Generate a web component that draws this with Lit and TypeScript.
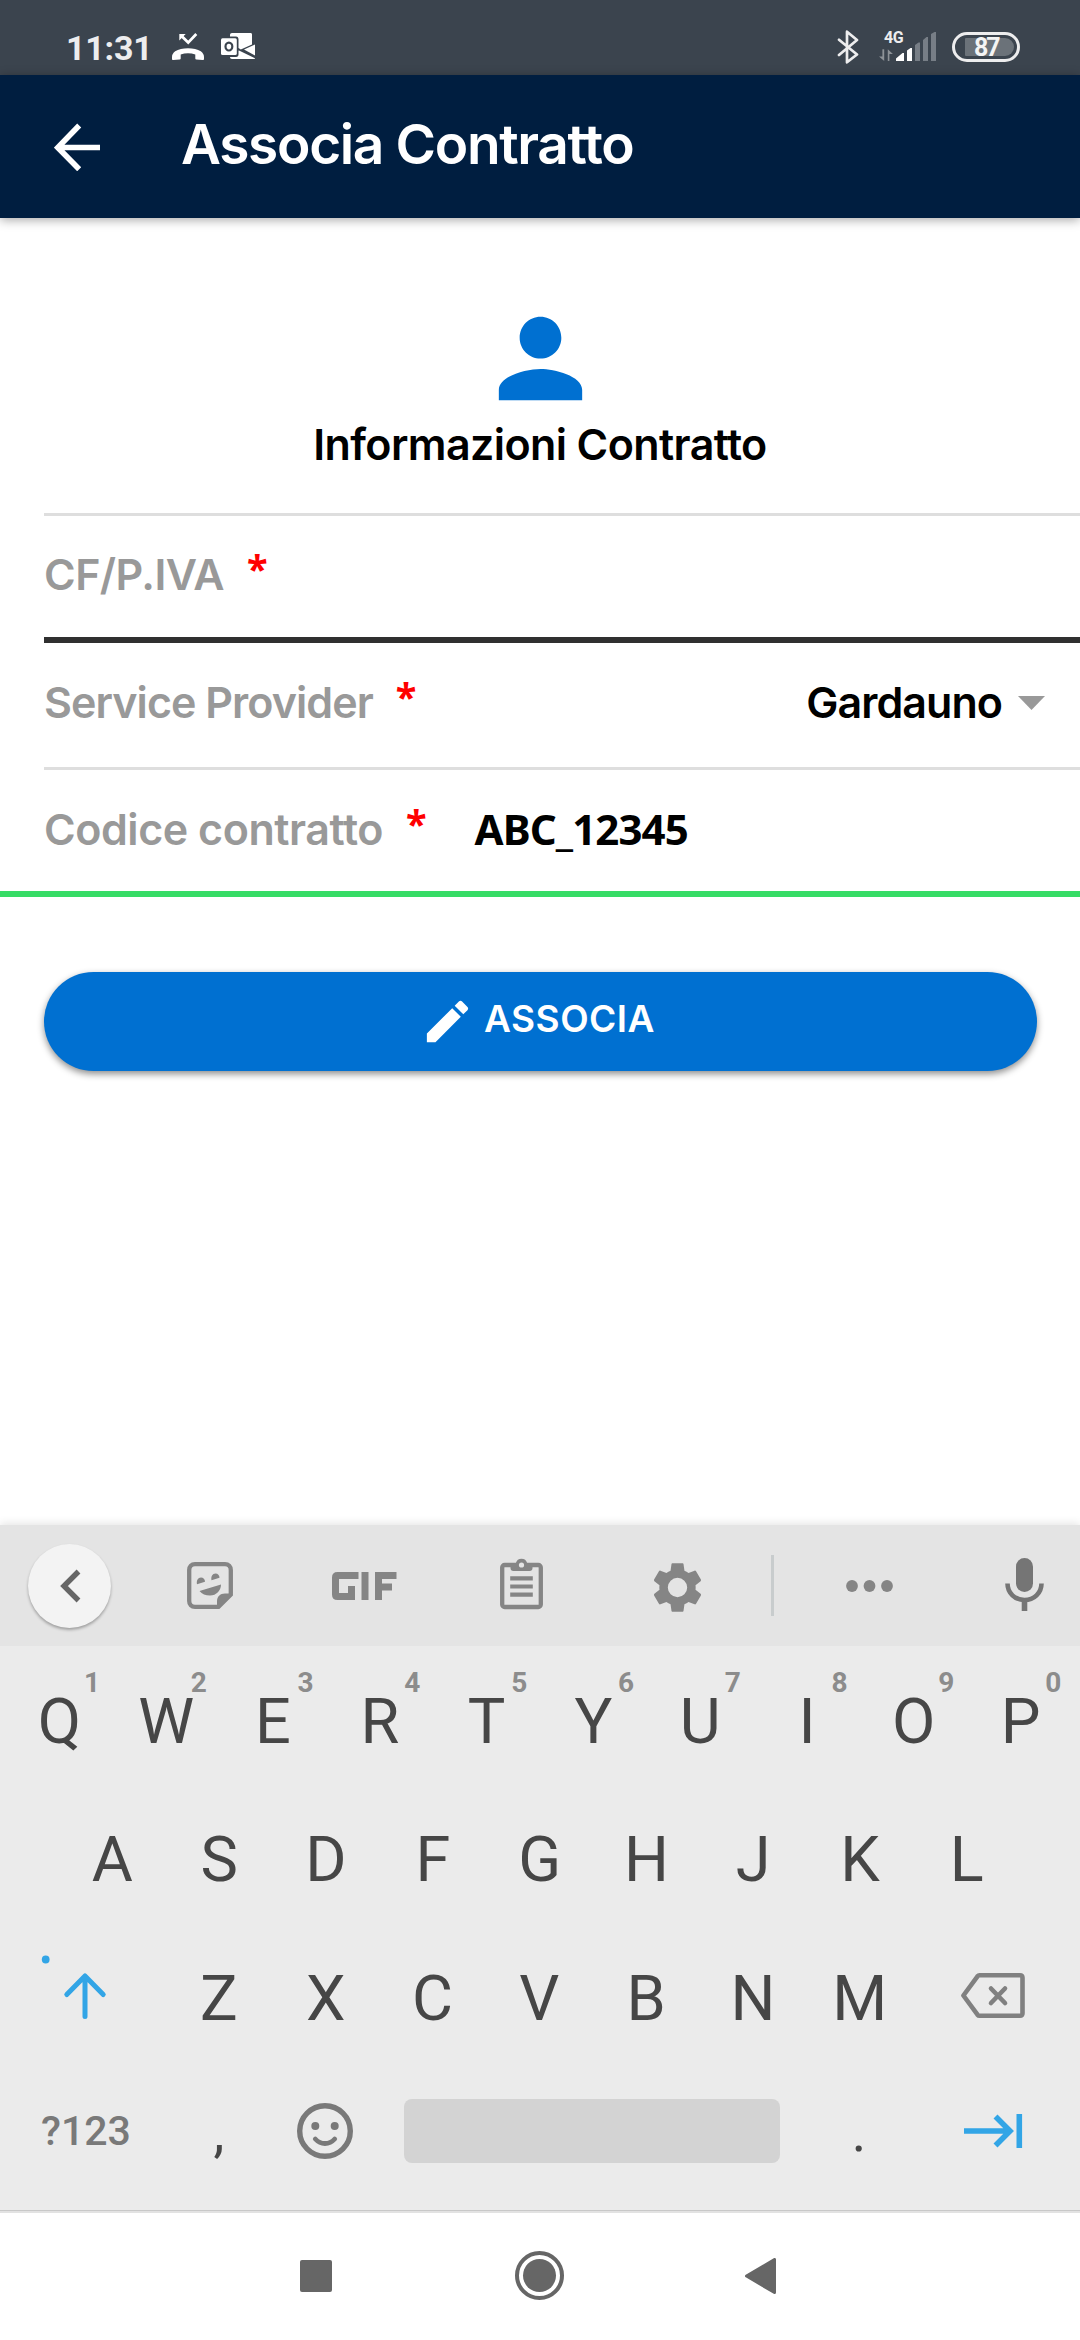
import { LitElement, html, css } from "lit";
import { customElement, property } from "lit/decorators.js";

/* ---------- Status bar ---------- */
@customElement("status-bar")
class StatusBar extends LitElement {
  static styles = css`
    :host { display: block; background: #3b444e; height: 75px; font-family: Roboto, sans-serif; }
    .bar { display: flex; height: 75px; padding: 0 60px 0 66px; box-sizing: border-box; align-items: flex-start; }
    .time { font-size: 34px; font-weight: 700; line-height: 40px; color: #ededee; margin-top: 28px; width: 106px; letter-spacing: -0.2px; white-space: nowrap; }
    .phone { margin-top: 32px; width: 32px; height: 29px; }
    .mail { margin: 32px 0 0 17px; width: 34px; height: 28px; }
    .spacer { flex: 1; }
    .bt { margin-top: 30px; width: 22px; height: 34px; }
    .net { margin: 30px 0 0 20px; width: 58px; height: 32px; position: relative; }
    .net svg { display: block; }
    .gen { position: absolute; left: 5px; top: -1px; font-size: 16px; line-height: 18px; font-weight: 700; color: #ededee; letter-spacing: -0.5px; }
    .batt { box-sizing: border-box; margin: 32px 0 0 15px; width: 68px; height: 30px; border: 3px solid #ededee; border-radius: 15px; padding: 3px 3px 3px 10px; display: flex; }
    .level { flex: 1; background: #6b7279; border-radius: 1px 9px 9px 1px; color: #f4f4f4; font-weight: 700; font-size: 25px; line-height: 19px; letter-spacing: -2px; padding-left: 9px; }
    svg { display: block; }
  `;
  render() {
    return html`
      <div class="bar">
        <div class="time">11:31</div>
        <svg class="phone" viewBox="0 0 32 29">
          <path fill="#fff" d="M16 16.2c5 0 9.6 1 12.800 3.100C31 20.900 32 22.800 32 25v2c0 .7-.6 1.200-1.300 1.100l-6.400-.6c-.6-.1-1-.5-1-1.100v-4c-4.600-1.400-10-1.400-14.600 0v4c0 .6-.4 1-1 1.100l-6.400.6C.6 28.200 0 27.700 0 27v-2c0-2.200 1-4.100 3.200-5.700C6.400 17.200 11 16.200 16 16.200z"/>
          <path fill="none" stroke="#fff" stroke-width="2.800" d="M9.500 4l6.700 6.600L24.300 2"/>
          <path fill="#fff" d="M7.300 2h6.400l-6.400 6.400z"/>
        </svg>
        <svg class="mail" viewBox="0 0 34 28">
          <path fill="#fff" d="M9 3.200C9 1.900 9.800 1 11 1h18.500c1 0 1.500.7 1.500 1.600v9.800L19.800 17.500 17.500 16V7.500c0-1.900-.8-3-2.500-3H9z"/>
          <path fill="#fff" d="M34 12.500v11L23 17.600z"/>
          <path fill="#fff" d="M18.500 18.800L34 26.200c0 .6-.5.8-1 .8H11c-1.200 0-2-.7-2-2h6c1.700 0 2.500-1.100 2.500-2.800v-3.800z"/>
          <rect x="0" y="6.300" width="15.800" height="16.700" rx="1.500" fill="#fff"/>
          <ellipse cx="7.900" cy="14.600" rx="3.400" ry="3.900" fill="none" stroke="#3b444e" stroke-width="2.200"/>
        </svg>
        <div class="spacer"></div>
        <svg class="bt" viewBox="0 0 22 34">
          <path fill="none" stroke="#ededee" stroke-width="2.700" stroke-linejoin="round" stroke-linecap="round" d="M2 9.800L20 24.500 10 32.300V1.700l10 8.300L2 25"/>
        </svg>
        <div class="net">
          <span class="gen">4G</span>
          <svg width="58" height="32" viewBox="0 0 58 32">
            <path fill="#8d9297" d="M3.400 19.300h1.800V31L0 26.500h3.400zM8.800 31h1.600v-7h3.500L8.800 19.300z"/>
            <path fill="#fff" d="M17 31v-2.600L23.500 23H25v8zM28 31V20.500l3.500-2.500H33v13z"/>
            <path fill="#777e86" d="M36 31V15l3.500-2.500H41V31zM44 31V10l3.500-3H49v24zM52 31V4l3.500-2H57v29z"/>
          </svg>
        </div>
        <div class="batt"><div class="level">87</div></div>
      </div>
    `;
  }
}

/* ---------- App bar ---------- */
@customElement("app-header")
class AppHeader extends LitElement {
  @property() heading = "";
  static styles = css`
    :host { display: block; }
    .bar { position: relative; z-index: 1; height: 143px; box-sizing: border-box; background: #001e40; display: flex; align-items: center; padding-left: 54px; box-shadow: 0 2px 10px rgba(0, 0, 0, 0.35); }
    .title { margin: 0 0 6px 79px; font: 600 55px/70px Inter, sans-serif; letter-spacing: -1.35px; color: #fff; white-space: nowrap; }
    svg { display: block; width: 48px; height: 48px; }
  `;
  render() {
    return html`<div class="bar">
      <svg viewBox="0 0 48 48"><path fill="none" stroke="#fff" stroke-width="5.600" d="M46 24.500H4M25.200 2.500L3.800 24.500l21.400 21.800"/></svg>
      <h1 class="title">${this.heading}</h1>
    </div>`;
  }
}

/* ---------- Form ---------- */
@customElement("contract-form")
class ContractForm extends LitElement {
  static styles = css`
    :host { display: block; font-family: Inter, sans-serif; }
    .intro { height: 295px; display: flex; flex-direction: column; align-items: center; padding-top: 78px; box-sizing: border-box; }
    .person { width: 125px; height: 125px; display: block; }
    .subtitle { margin: 0; font-size: 43px; font-weight: 600; line-height: 52px; letter-spacing: -0.6px; color: #000; margin-top: -3px; white-space: nowrap; }
    .rows { border-top: 3px solid #dedede; margin-left: 44px; }
    .row { height: 127px; box-sizing: border-box; border-bottom: 3px solid #dedede; display: flex; align-items: flex-start; padding-top: 33px; padding-right: 35px; font-size: 43px; line-height: 52px; white-space: nowrap; }
    .row.dark { border-bottom: 6px solid #303030; padding-top: 32px; }
    .row.active { border-bottom: 6px solid #37dc66; margin-left: -44px; padding-left: 44px; }
    .label { color: #999; font-weight: 600; }
    .cf { letter-spacing: -0.55px; }
    .sp { letter-spacing: -0.95px; }
    .cc { letter-spacing: -0.45px; }
    .star { color: #f00; font: 700 38px/40px "Noto Sans", sans-serif; margin-left: 23px; }
    .value { font: 700 42px/52px "Noto Sans", sans-serif; color: #000; margin-left: 48px; letter-spacing: -0.9px; }
    .choice { margin-left: auto; font-weight: 600; letter-spacing: -0.95px; color: #000; }
    .caret { width: 27px; height: 14px; margin: 20px 0 0 16px; }
    .action { margin: 75px 43px 0 44px; height: 99px; box-sizing: border-box; padding-right: 6px; border-radius: 49.500px; background: #0070d1; box-shadow: 0 3px 7px rgba(0, 0, 0, 0.45); display: flex; justify-content: center; align-items: center; color: #fff; font-size: 37px; font-weight: 600; line-height: 50px; letter-spacing: 0.5px; gap: 9px; }
    .action svg { width: 55px; height: 55px; }
    .caption { margin-bottom: 6px; }
  `;
  render() {
    return html`
      <div class="intro">
        <svg class="person" viewBox="0 0 24 24"><path fill="#0070d1" d="M12 12c2.210 0 4-1.790 4-4s-1.790-4-4-4-4 1.790-4 4 1.790 4 4 4zm0 2c-2.670 0-8 1.340-8 4v2h16v-2c0-2.660-5.330-4-8-4z"/></svg>
        <h2 class="subtitle">Informazioni Contratto</h2>
      </div>
      <div class="rows">
        <div class="row dark"><span class="label cf">CF/P.IVA</span><span class="star">*</span></div>
        <div class="row"><span class="label sp">Service Provider</span><span class="star">*</span>
          <span class="choice">Gardauno</span>
          <svg class="caret" viewBox="0 0 27 14"><path fill="#999" d="M0 0h27L13.500 14z"/></svg>
        </div>
        <div class="row active"><span class="label cc">Codice contratto</span><span class="star">*</span><span class="value">ABC_12345</span></div>
      </div>
      <div class="action">
        <svg viewBox="0 0 24 24"><path fill="#fff" d="M3 17.250V21h3.750L17.810 9.940l-3.750-3.750L3 17.250zM20.710 7.040c.39-.39.39-1.020 0-1.410l-2.340-2.340c-.39-.39-1.020-.39-1.410 0l-1.830 1.830 3.750 3.750 1.830-1.830z"/></svg>
        <span class="caption">ASSOCIA</span>
      </div>
    `;
  }
}

/* ---------- Keyboard ---------- */
@customElement("soft-keyboard")
class SoftKeyboard extends LitElement {
  static styles = css`
    :host { display: block; font-family: Roboto, sans-serif; }
    svg { display: block; overflow: visible; }
    .tools { height: 121px; background: #e4e4e4; box-shadow: 0 -2px 8px rgba(0, 0, 0, 0.1); display: flex; align-items: center; box-sizing: border-box; padding: 0 36px 0 28px; }
    .back { width: 84px; height: 84px; border-radius: 50%; background: #f3f3f3; box-shadow: 0 2px 3px rgba(0, 0, 0, 0.3); display: flex; align-items: center; justify-content: center; margin-right: 76px; }
    .sticker { margin-right: 99px; }
    .gif { margin-right: 103px; }
    .clip { margin: 0 111px 4px 0; }
    .gear { margin: 3px 70px 0 0; }
    .rule { width: 3px; height: 61px; background: #c8cccd; margin-right: 72px; }
    .dots { margin-right: 112px; }
    .mic { margin-bottom: 2px; }
    .keys { background: #ebebeb; height: 564px; box-sizing: border-box; padding-top: 6px; }
    .line { display: flex; height: 138px; align-items: center; color: #464646; font-size: 63px; line-height: 74px; }
    .top { height: 139px; padding-left: 6px; }
    .mid { padding-left: 59px; }
    .low { height: 139px; }
    .base { height: 126px; }
    .key { width: 106.800px; text-align: center; position: relative; flex: none; }
    .hint { position: absolute; left: 66px; width: 40px; top: -18px; text-align: center; font-size: 28px; line-height: 32px; font-weight: 700; color: #8c8c8c; }
    .shift { width: 101.500px; padding-left: 64px; margin-bottom: 6px; }
    .del { margin: 0 0 6px 48px; }
    .mode { width: 124.500px; padding-left: 41px; font-size: 41px; font-weight: 500; color: #797979; line-height: 48px; white-space: nowrap; }
    .punct { width: 107px; text-align: center; font-size: 55px; line-height: 64px; padding-top: 2px; }
    .smile { margin-left: 24px; }
    .space { width: 376px; height: 64px; border-radius: 8px; background: #d3d3d3; margin: 0 26px 0 51px; }
    .tab { margin-left: 51px; }
  `;
  private key(k: string, hint = "") {
    return html`<div class="key">${k}${hint ? html`<span class="hint">${hint}</span>` : ""}</div>`;
  }
  render() {
    return html`
      <div class="tools">
        <div class="back"><svg width="22" height="34" viewBox="0 0 22 34"><path fill="none" stroke="#666" stroke-width="5.400" d="M19.500 2.500L5 17l14.500 14.500"/></svg></div>
        <svg class="sticker" width="46" height="47" viewBox="0 0 46 47">
          <path fill="none" stroke="#858585" stroke-width="4.300" d="M8 2.200h30c3.600 0 5.800 2.200 5.800 5.800v24.500L31.500 44.800H8c-3.600 0-5.800-2.200-5.800-5.800V8c0-3.600 2.200-5.800 5.800-5.800z"/>
          <path fill="#858585" d="M44.500 31.500H38c-5 0-8 3-8 8v6h2.500L45 33zM12.500 29l21.500-6.500c0 6-4.500 11-11 11-4.500 0-8-1.500-10.500-4.500z"/>
          <path fill="#858585" d="M10 22.300c-.8-3.800 1-6.800 4-6.800 2.300 0 4 2 4 4.200zM24.500 18.300c-.8-3.800 1-6.800 4-6.800 2.300 0 4 2 4 4.200z"/>
        </svg>
        <svg class="gif" width="65" height="28" viewBox="0 0 65 28">
          <path fill="none" stroke="#858585" stroke-width="7" d="M23 7V3.500H5.500q-2 0-2 2v17q0 2 2 2H19.500V14"/>
          <path fill="#858585" d="M16 14h7v6h-7zM29.500 0h7v28h-7zM43 0h21.500v7H50v4.500h10v7H50V28h-7z"/>
        </svg>
        <svg class="clip" width="43" height="51" viewBox="0 0 43 51">
          <rect x="2.200" y="7" width="38.600" height="42" rx="2.500" fill="none" stroke="#858585" stroke-width="4.300"/>
          <path fill="#858585" d="M10.500 5h5.400a5.800 5.800 0 0 1 11.200 0h5.400v5q0 3-3 3h-16q-3 0-3-3z"/>
          <circle cx="21.500" cy="7" r="2.600" fill="#e4e4e4"/>
          <path stroke="#858585" stroke-width="4.200" d="M10.200 20.300h22.600M10.200 28.500h22.600M10.200 36.700h22.600"/>
        </svg>
        <svg class="gear" width="47" height="49" viewBox="2.300 2 19.400 20"><path fill="#858585" d="M19.430 12.980c.04-.32.07-.64.07-.98s-.03-.66-.07-.98l2.110-1.650c.19-.15.24-.42.12-.64l-2-3.460c-.12-.22-.39-.3-.61-.22l-2.490 1c-.52-.4-1.080-.73-1.690-.98l-.38-2.650C14.460 2.180 14.250 2 14 2h-4c-.25 0-.46.18-.49.42l-.38 2.650c-.61.25-1.170.59-1.690.98l-2.490-1c-.23-.09-.49 0-.61.22l-2 3.460c-.13.22-.07.49.12.64l2.110 1.650c-.04.32-.07.65-.07.98s.03.66.07.98l-2.110 1.650c-.19.15-.24.42-.12.64l2 3.460c.12.22.39.3.61.22l2.490-1c.52.4 1.080.73 1.690.98l.38 2.650c.03.24.24.42.49.42h4c.25 0 .46-.18.49-.42l.38-2.650c.61-.25 1.170-.59 1.690-.98l2.490 1c.23.09.49 0 .61-.22l2-3.460c.12-.22.07-.49-.12-.64l-2.110-1.650zM12 16a4 4 0 1 1 0-8 4 4 0 0 1 0 8z"/></svg>
        <div class="rule"></div>
        <svg class="dots" width="47" height="12" viewBox="0 0 47 12"><g fill="#858585"><circle cx="6" cy="6" r="5.900"/><circle cx="23.500" cy="6" r="5.900"/><circle cx="41" cy="6" r="5.900"/></g></svg>
        <svg class="mic" width="39" height="53" viewBox="0 0 39 53">
          <rect x="11" y="0" width="17" height="34" rx="8.500" fill="#757575"/>
          <path fill="none" stroke="#757575" stroke-width="4.600" d="M2.500 25.500c0 9.500 7.500 16.500 17 16.500s17-7 17-16.500"/>
          <path fill="#757575" d="M16.700 41h5.600v12h-5.600z"/>
        </svg>
      </div>
      <div class="keys">
        <div class="line top">${[..."QWERTYUIOP"].map((k, i) => this.key(k, String((i + 1) % 10)))}</div>
        <div class="line mid">${[..."ASDFGHJKL"].map((k) => this.key(k))}</div>
        <div class="line low">
          <div class="shift">
            <svg width="42" height="46" viewBox="0 0 42 46">
              <path fill="none" stroke="#32a5e6" stroke-width="5" stroke-linecap="round" stroke-linejoin="round" d="M21 43.500V3M2.800 21.500L21 3l18.200 18.500"/>
              <circle cx="-18.300" cy="-13.500" r="3.900" fill="#32a5e6"/>
            </svg>
          </div>
          ${[..."ZXCVBNM"].map((k) => this.key(k))}
          <svg class="del" width="64" height="45" viewBox="0 0 64 45">
            <path fill="none" stroke="#808080" stroke-width="4.600" stroke-linejoin="round" d="M18.500 2.300H59q2.500 0 2.500 2.500v35.400q0 2.500-2.500 2.500H18.500q-1.200 0-2-1L2.400 22.500 16.500 3.300q.8-1 2-1z"/>
            <path stroke="#808080" stroke-width="4.600" stroke-linecap="round" d="M30 15.500l14 14.500M44 15.500L30 30"/>
          </svg>
        </div>
        <div class="line base">
          <div class="mode">?123</div>
          <div class="punct">,</div>
          <svg class="smile" width="56" height="56" viewBox="0 0 56 56">
            <circle cx="28" cy="28" r="25.300" fill="none" stroke="#797979" stroke-width="5.400"/>
            <circle cx="18.300" cy="23" r="4" fill="#797979"/><circle cx="37.700" cy="23" r="4" fill="#797979"/>
            <path fill="none" stroke="#797979" stroke-width="4.800" stroke-linecap="round" d="M18.300 36c5.500 6 13.900 6 19.400 0"/>
          </svg>
          <div class="space"></div>
          <div class="punct">.</div>
          <svg class="tab" width="59" height="34" viewBox="0 0 59 34">
            <path fill="none" stroke="#32a5e6" stroke-width="5.600" d="M0 17h45M31.500 2.500L46 17 31.500 31.500M55.300 0v34"/>
          </svg>
        </div>
      </div>
    `;
  }
}

/* ---------- System navigation ---------- */
@customElement("nav-bar")
class NavBar extends LitElement {
  static styles = css`
    :host { display: block; }
    .nav { height: 130px; box-sizing: border-box; border-top: 1px solid #c8c8c8; box-shadow: inset 0 2px 0 #e2e2e2; background: #fff; display: flex; align-items: center; padding-left: 300px; }
    .square { width: 32px; height: 32px; border-radius: 2px; background: #666; margin-right: 183px; }
    svg { display: block; }
    .home { margin-right: 181px; }
  `;
  render() {
    return html`<div class="nav">
      <div class="square"></div>
      <svg class="home" width="49" height="49" viewBox="0 0 49 49"><circle cx="24.500" cy="24.500" r="22.500" fill="none" stroke="#666" stroke-width="4"/><circle cx="24.500" cy="24.500" r="16.500" fill="#666"/></svg>
      <svg width="31" height="36" viewBox="0 0 31 36"><path fill="#666" stroke="#666" stroke-width="3" stroke-linejoin="round" d="M1.500 18L29.500 1.500v33z"/></svg>
    </div>`;
  }
}

@customElement("app-root")
class AppRoot extends LitElement {
  static styles = css`
    :host { display: block; }
    .screen { width: 1080px; height: 2340px; display: flex; flex-direction: column; background: #fff; overflow: hidden; }
    .fill { flex: 1; }
  `;
  render() {
    return html`<div class="screen">
      <status-bar></status-bar>
      <app-header heading="Associa Contratto"></app-header>
      <contract-form class="fill"></contract-form>
      <soft-keyboard></soft-keyboard>
      <nav-bar></nav-bar>
    </div>`;
  }
}
